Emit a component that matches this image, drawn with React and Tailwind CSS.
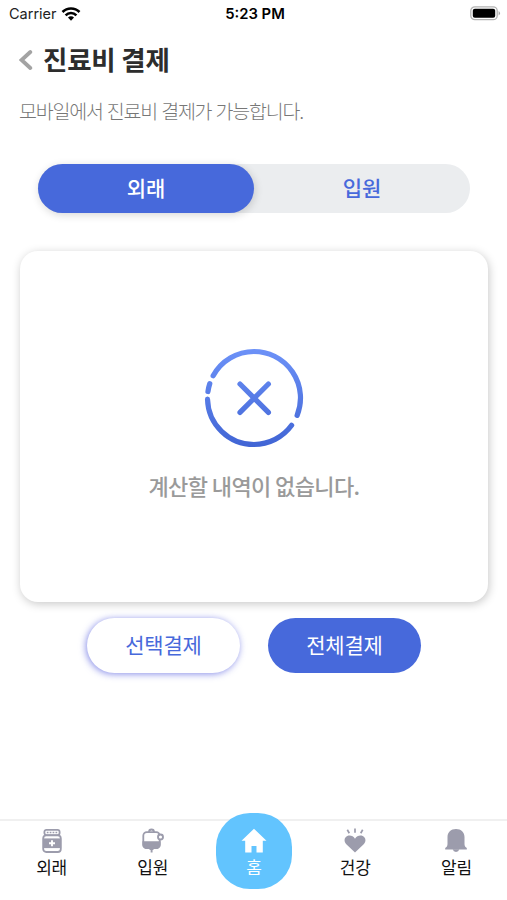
import { useState } from "react";

const tabs = [
  { id: "out", label: "외래" },
  { id: "in", label: "입원" },
];

const navItems = [
  { id: "out", label: "외래", icon: <BottleIcon /> },
  { id: "in", label: "입원", icon: <DripIcon /> },
  { id: "home", label: "홈", icon: <HomeIcon /> },
  { id: "health", label: "건강", icon: <HeartIcon /> },
  { id: "alarm", label: "알림", icon: <BellIcon /> },
];

function WifiIcon() {
  return (
    <svg width="20" height="16" viewBox="0 0 20 16" fill="none" stroke="#000" strokeWidth="2.6">
      <path d="M1.5 6a12 12 0 0 1 17 0" />
      <path d="M4.6 9.3a7.6 7.6 0 0 1 10.8 0" />
      <path d="M10 14.8l-3-3.2a4.2 4.2 0 0 1 6 0z" fill="#000" stroke="none" />
    </svg>
  );
}

function BatteryIcon() {
  return (
    <svg width="31" height="15" viewBox="0 0 31 15">
      <rect x="0.8" y="0.8" width="26.4" height="12.9" rx="4" fill="#fff" stroke="#b3b3b3" strokeWidth="1.3" />
      <rect x="2.8" y="2.8" width="22.4" height="8.9" rx="2" fill="#000" />
      <path d="M28.6 5a2.5 2.5 0 0 1 0 4.5z" fill="#a8a8a8" />
    </svg>
  );
}

function EmptyIcon() {
  return (
    <svg width="100" height="100" viewBox="0 0 100 100" fill="none" strokeWidth="5.2" strokeLinecap="round">
      <defs>
        <linearGradient id="ring" x1="0" y1="0" x2="0" y2="100" gradientUnits="userSpaceOnUse">
          <stop offset="0" stopColor="#6d92f8" />
          <stop offset="1" stopColor="#4064d4" />
        </linearGradient>
      </defs>
      <g stroke="url(#ring)">
        <path d="M9.14 27.81A46.5 46.5 0 0 1 50 3.5A46.5 46.5 0 0 1 93.11 67.42" />
        <path d="M5.78 35.63A46.5 46.5 0 0 0 3.95 43.53" />
        <path d="M3.52 51.2A46.5 46.5 0 0 0 50 96.5A46.5 46.5 0 0 0 87.62 77.33" />
        <path d="M36 36l28.4 28.4M64.4 36L36 64.4" />
      </g>
    </svg>
  );
}

function BottleIcon() {
  return (
    <svg width="22" height="26" viewBox="0 0 22 26">
      <rect x="3.4" y="1.9" width="15.2" height="5.2" rx="2" fill="#fff" stroke="#9c9cac" strokeWidth="1.8" />
      <path d="M5.8 4.4h10.4" stroke="#9c9cac" strokeWidth="1.5" strokeDasharray="1.7 1.2" />
      <rect x="2.2" y="7.4" width="17.6" height="16.6" rx="3" fill="#fff" stroke="#9c9cac" strokeWidth="1.8" />
      <path d="M1.9 10.4h18.2v9.7H1.9z" fill="#9c9cac" />
      <path d="M11 12.2v6M8 15.2h6" stroke="#fff" strokeWidth="1.9" />
    </svg>
  );
}

function DripIcon() {
  return (
    <svg width="22" height="26" viewBox="0 0 22 26" fill="none" stroke="#9c9cac" strokeWidth="1.8">
      <path d="M7 4a2.5 2.5 0 0 1 5 0" />
      <rect x="1.3" y="4.2" width="16.4" height="16" rx="3.5" fill="#fff" />
      <path d="M1.3 14.2h16.4v2.5a3.5 3.5 0 0 1-3.5 3.5H4.8a3.5 3.5 0 0 1-3.5-3.5z" fill="#9c9cac" />
      <circle cx="18.5" cy="9" r="2.5" fill="#fff" strokeWidth="1.9" />
      <path d="M7.5 21h4M9.6 20v4.500" strokeWidth="1.9" />
    </svg>
  );
}

function HomeIcon() {
  return (
    <svg width="26" height="26" viewBox="0 0 26 26">
      <path d="M13 .8L.5 12.7h3.700V24.500h6.300v-6.600h5v6.600h6.300V12.700h3.700z" fill="#fff" />
    </svg>
  );
}

function HeartIcon() {
  return (
    <svg width="22" height="26" viewBox="0 0 22 26">
      <path d="M11 24.5L2.3 16.2C-.6 13.2.4 9.3 3.3 8.1c2.800-1.300 6 0 7.700 2.700 1.700-2.700 4.900-4 7.700-2.700 2.900 1.200 3.900 5.100 1 8.100z" fill="#9c9cac" />
      <path d="M3.3 1.800l2 3.400M11 .6v4.200M18.700 1.800l-2 3.400" stroke="#9c9cac" strokeWidth="1.7" />
    </svg>
  );
}

function BellIcon() {
  return (
    <svg width="22" height="26" viewBox="0 0 22 26">
      <path d="M11 1C5.8 1 2.5 4.5 2.5 9v7c0 2-.8 3-2.300 4v1.500h21.600V20c-1.500-1-2.300-2-2.300-4V9c0-4.500-3.300-8-8.500-8z" fill="#9c9cac" />
      <path d="M7.7 21.3a3.4 3.4 0 0 0 6.6 0z" fill="#9c9cac" />
    </svg>
  );
}

export default function App() {
  const [tab, setTab] = useState("out");

  return (
    <div className="flex h-[900px] w-[507px] flex-col overflow-hidden bg-white font-['Noto_Sans_CJK_KR',sans-serif]">
      <div className="grid h-[27px] shrink-0 grid-cols-3 items-center pl-[9px] pr-[6px] font-['Inter',sans-serif] text-black">
        <div className="flex items-center gap-1">
          <span className="text-[14.5px] text-[#222]">Carrier</span>
          <WifiIcon />
        </div>
        <span className="pt-px text-center text-[14.8px] font-semibold">5:23 PM</span>
        <div className="flex justify-end">
          <BatteryIcon />
        </div>
      </div>

      <header className="flex h-[65px] shrink-0 items-center pl-[19px]">
        <button aria-label="back">
          <svg width="14" height="22" viewBox="0 0 14 22" fill="none" stroke="#a3a3a3" strokeWidth="3.8" strokeLinecap="round">
            <path d="M11.3 3L2.6 11l8.7 8" />
          </svg>
        </button>
        <h1 className="ml-[10px] pb-px text-[26.5px] leading-none font-bold tracking-[-0.2px] whitespace-nowrap text-[#2d2d2d]">진료비 결제</h1>
      </header>

      <p className="flex h-[38px] shrink-0 items-center pl-[19px] text-[19.5px] font-light tracking-[-1.2px] [word-spacing:1px] whitespace-nowrap text-[#777]">
        모바일에서 진료비 결제가 가능합니다.
      </p>

      <div className="ml-[38px] mr-[37px] mt-[34px] flex h-[49px] shrink-0 rounded-full bg-[#ebedef]">
        {tabs.map((t) => (
          <button
            key={t.id}
            onClick={() => setTab(t.id)}
            className={`flex-1 rounded-full pb-0.5 text-[21px] font-medium ${tab === t.id ? "bg-[#4769db] text-white shadow-[1px_2px_8px_rgba(0,0,0,0.16)]" : "text-[#4769db]"}`}
          >
            {t.label}
          </button>
        ))}
      </div>

      <section className="mr-[19px] ml-5 mt-[38px] flex h-[351px] shrink-0 flex-col items-center rounded-[18px] bg-white pt-[97px] shadow-[1px_2px_10px_rgba(0,0,0,0.22)]">
        <EmptyIcon />
        <p className="mt-[21px] text-[22px] leading-[32px] font-medium tracking-[-0.6px] whitespace-nowrap text-[#9a9a9a]">계산할 내역이 없습니다.</p>
      </section>

      <div className="mt-4 flex h-[55px] shrink-0 gap-[28px] pl-[87px]">
        <button className="w-[153px] rounded-full bg-white pb-0.5 text-[21px] tracking-[-0.2px] text-[#4769db] shadow-[-1px_1px_7px_rgba(71,80,219,0.65)]">선택결제</button>
        <button className="w-[153px] rounded-full bg-[#4769db] pb-0.5 text-[21px] tracking-[-0.2px] text-white">전체결제</button>
      </div>

      <nav className="mt-auto grid h-[81px] shrink-0 grid-cols-5 border-t-2 border-[#f0f0f0] pl-px">
        {navItems.map((item) =>
          item.id === "home" ? (
            <button key={item.id} className="-mt-[8px] flex h-[76px] w-[76px] flex-col items-center justify-self-center rounded-[34px] bg-[#62c4fe] pt-[15px] text-white">
              {item.icon}
              <span className="mt-px text-[17px] leading-[24px]">{item.label}</span>
            </button>
          ) : (
            <button key={item.id} className="flex flex-col items-center pt-[7px] text-[#111]">
              {item.icon}
              <span className="mt-px text-[17px] leading-[24px] tracking-[-0.2px]">{item.label}</span>
            </button>
          )
        )}
      </nav>
    </div>
  );
}
